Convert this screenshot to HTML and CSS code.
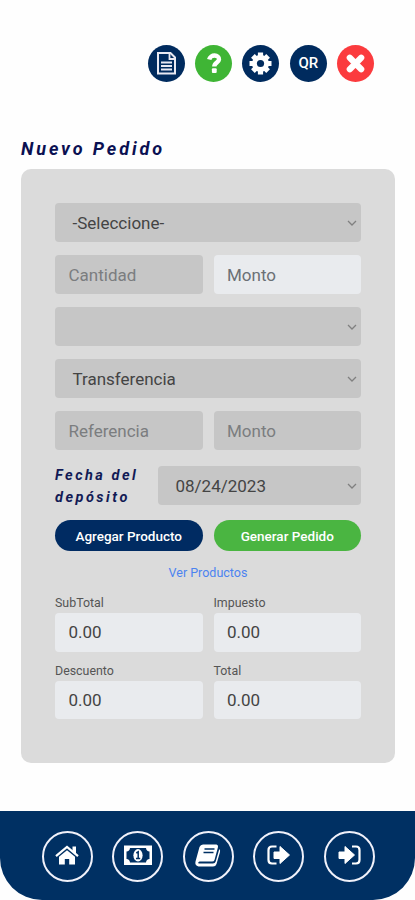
FILE: index.html
```html
<!DOCTYPE html>
<html lang="es">
<head>
    <meta charset="UTF-8">
    <meta name="viewport" content="width=device-width, initial-scale=1.0">
    <title>Nuevo Pedido</title>
    <link rel="stylesheet" href="styles.css">
</head>
<body>
    <!-- Acciones superiores -->
    <header class="top-actions">
        <a class="action" aria-label="Documento">
            <svg width="37" height="37" viewBox="0 0 37 37">
                <path d="M10 8H22.500L27 12.500V28.500H10Z" fill="none" stroke="#e9eaf3" stroke-width="2"/>
                <path d="M21.500 8V14H27" fill="none" stroke="#e9eaf3" stroke-width="1.800"/>
                <path d="M13 17.500H24M13 21H24M13 24.500H24" stroke="#e9eaf3" stroke-width="1.900"/>
            </svg>
        </a>
        <a class="action action-green" aria-label="Ayuda">
            <svg width="37" height="37" viewBox="0 0 37 37">
                <path d="M14.200 14.500C15.200 9 24.500 9.500 24 14.500C23.700 17.500 19.300 17.500 19.300 21.500" fill="none" stroke="#fff" stroke-width="4.400"/>
                <rect x="16.900" y="23.300" width="4.800" height="4.600" rx="1" fill="#fff"/>
            </svg>
        </a>
        <a class="action" aria-label="Ajustes">
            <svg width="37" height="37" viewBox="0 0 37 37">
                <g stroke="#fff" stroke-width="5.200">
                    <path d="M18.500 7.500V29.500M7.500 18.500H29.500"/>
                    <path d="M10.900 10.900L26.100 26.100M26.100 10.900L10.900 26.100"/>
                </g>
                <circle cx="18.500" cy="18.500" r="8.500" fill="#fff"/>
                <circle cx="18.500" cy="18.500" r="3.600" fill="#002b5e"/>
            </svg>
        </a>
        <a class="action">QR</a>
        <a class="action action-red" aria-label="Cerrar">
            <svg width="37" height="37" viewBox="0 0 37 37">
                <path d="M12.800 12.800L24.200 24.200M24.200 12.800L12.800 24.200" stroke="#fff" stroke-width="6.200" stroke-linecap="round"/>
            </svg>
        </a>
    </header>

    <h1 class="title">Nuevo Pedido</h1>

    <!-- Formulario del pedido -->
    <main class="card">
        <div class="field select">
            <span>-Seleccione-</span>
            <svg class="chevron" width="10" height="6" viewBox="0 0 10 6"><path d="M1 1L5 5L9 1"/></svg>
        </div>
        <div class="row">
            <div class="field placeholder">Cantidad</div>
            <div class="field placeholder light">Monto</div>
        </div>
        <div class="field select">
            <span></span>
            <svg class="chevron" width="10" height="6" viewBox="0 0 10 6"><path d="M1 1L5 5L9 1"/></svg>
        </div>
        <div class="field select">
            <span>Transferencia</span>
            <svg class="chevron" width="10" height="6" viewBox="0 0 10 6"><path d="M1 1L5 5L9 1"/></svg>
        </div>
        <div class="row">
            <div class="field placeholder">Referencia</div>
            <div class="field placeholder">Monto</div>
        </div>
        <div class="date-row">
            <div class="date-label">Fecha del depósito</div>
            <div class="field select date">
                <span>08/24/2023</span>
                <svg class="chevron" width="10" height="6" viewBox="0 0 10 6"><path d="M1 1L5 5L9 1"/></svg>
            </div>
        </div>
        <div class="row">
            <a class="btn">Agregar Producto</a>
            <a class="btn btn-green">Generar Pedido</a>
        </div>
        <a class="link">Ver Productos</a>

        <!-- Totales -->
        <div class="totals">
            <div class="total"><label>SubTotal</label><div class="field light">0.00</div></div>
            <div class="total"><label>Impuesto</label><div class="field light">0.00</div></div>
            <div class="total"><label>Descuento</label><div class="field light">0.00</div></div>
            <div class="total"><label>Total</label><div class="field light">0.00</div></div>
        </div>
    </main>

    <!-- Barra inferior -->
    <nav class="bottom-nav">
        <a class="nav-item" aria-label="Inicio">
            <svg width="30" height="30" viewBox="0 0 30 30">
                <path d="M4 15.200L15 6L26 15.200" fill="none" stroke="#fff" stroke-width="2.200"/>
                <path d="M20.500 5.500H24V13L20.500 10Z" fill="#fff"/>
                <path d="M7 15.800L15 9.200L23 15.800V23.500H17.200V18H12.800V23.500H7Z" fill="#fff"/>
            </svg>
        </a>
        <a class="nav-item" aria-label="Pagos">
            <svg width="30" height="30" viewBox="0 0 30 30">
                <rect x="1" y="4.500" width="28" height="19.500" fill="#fff"/>
                <path d="M7 7H23A4 4 0 0 0 26.500 10.500V18A4 4 0 0 0 23 21.500H7A4 4 0 0 0 3.500 18V10.500A4 4 0 0 0 7 7Z" fill="#003063"/>
                <ellipse cx="15" cy="14.300" rx="4.600" ry="6.200" fill="#fff"/>
                <path d="M13.300 12L15.200 10.800V17M13 17.500H17.200" fill="none" stroke="#003063" stroke-width="1.500"/>
            </svg>
        </a>
        <a class="nav-item" aria-label="Catálogo">
            <svg width="30" height="30" viewBox="0 0 30 30">
                <path d="M10 3.500H23.500Q25.500 4 25 6L21.500 19Q21 20.500 19 20.500H6.500Q4.500 21 5.500 22.500H20Q22 22.500 22.700 20.500L26.300 8Q27.500 9.500 27 11L23.500 23Q22.700 25.500 20 25.500H5.500Q1.500 24.500 2.500 20.500L6.500 6Q7.500 3.500 10 3.500Z" fill="#fff"/>
                <path d="M11.500 8H21.500M10.500 11.500H20.500" stroke="#003063" stroke-width="1.600"/>
            </svg>
        </a>
        <a class="nav-item" aria-label="Salir">
            <svg width="30" height="30" viewBox="0 0 30 30">
                <path d="M12.500 5.500H8Q4.500 5.500 4.500 9V19Q4.500 22.500 8 22.500H12.500" fill="none" stroke="#fff" stroke-width="2.200"/>
                <path d="M10 11H16V5.500L25.500 14L16 22.500V17.500H10Z" fill="#fff" stroke="#fff" stroke-linejoin="round"/>
            </svg>
        </a>
        <a class="nav-item" aria-label="Entrar">
            <svg width="30" height="30" viewBox="0 0 30 30">
                <path d="M18 5.500H22Q25.500 5.500 25.500 9V19Q25.500 22.500 22 22.500H18" fill="none" stroke="#fff" stroke-width="2.200"/>
                <path d="M5 11H11V5.500L20.500 14L11 22.500V17.500H5Z" fill="#fff" stroke="#fff" stroke-linejoin="round"/>
            </svg>
        </a>
    </nav>
</body>
</html>
```
FILE: styles.css
```css
* {
    box-sizing: border-box;
}
body {
    margin: 0;
    height: 900px;
    display: flex;
    flex-direction: column;
    background: #fefefe;
    font-family: Roboto, "Liberation Sans", sans-serif;
    color: #444;
}

/* Acciones superiores */
.top-actions {
    display: flex;
    justify-content: flex-end;
    gap: 10.400px;
    padding: 44.500px 40.800px 0 0;
}
.action {
    width: 37px;
    height: 37px;
    border-radius: 50%;
    background: #002b5e;
    display: flex;
    align-items: center;
    justify-content: center;
    color: #fff;
    font-size: 15px;
    font-weight: 500;
}
.action-green {
    background: #3fb535;
}
.action-red {
    background: #fb3b3e;
}

.title {
    margin: 56.500px 0 0 21px;
    height: 31px;
    line-height: 22px;
    font-size: 18px;
    font-style: italic;
    font-weight: 700;
    letter-spacing: 2.900px;
    color: #0a1052;
}

/* Formulario */
.card {
    height: 594px;
    margin: 0 20px 0 21px;
    padding: 34px 34px 0;
    border-radius: 10px;
    background: #dbdbdb;
    display: flex;
    flex-direction: column;
    gap: 13px;
}
.row {
    display: grid;
    grid-template-columns: 1fr 1fr;
    gap: 11px;
}
.field {
    height: 39px;
    padding: 1px 13.500px 0;
    border-radius: 4px;
    background: #c6c6c6;
    display: flex;
    align-items: center;
    font-size: 17px;
}
.placeholder {
    color: #7b7d7f;
}
.light {
    background: #e9ebee;
}
.light.placeholder {
    color: #6b7075;
}
.select {
    justify-content: space-between;
    padding: 1px 4px 0 17.500px;
}
.chevron path {
    fill: none;
    stroke: #808080;
    stroke-width: 1.300;
}
.date-row {
    height: 44px;
    display: flex;
    align-items: center;
    justify-content: space-between;
}
.date-label {
    width: 95px;
    padding-top: 3px;
    line-height: 22px;
    font-size: 14.500px;
    font-style: italic;
    font-weight: 700;
    letter-spacing: 2.500px;
    color: #121a55;
}
.date {
    width: 203px;
}
.btn {
    height: 31px;
    border-radius: 16px;
    background: #002b62;
    color: #fff;
    display: flex;
    align-items: center;
    justify-content: center;
    font-size: 13.500px;
    font-weight: 500;
}
.btn-green {
    background: #4ab541;
}
.link {
    align-self: center;
    line-height: 17px;
    font-size: 12.500px;
    color: #4b83f0;
}

/* Totales */
.totals {
    display: grid;
    grid-template-columns: 1fr 1fr;
    gap: 10px 11px;
}
.total label {
    display: block;
    height: 19px;
    line-height: 17px;
    font-size: 12.400px;
    color: #555;
}
.total .field {
    height: 38.500px;
    padding-top: 0;
}

/* Barra inferior */
.bottom-nav {
    height: 89px;
    margin-top: auto;
    border-radius: 0 0 42px 42px;
    background: #003063;
    display: flex;
    justify-content: center;
    gap: 19.500px;
    padding: 19.500px 0 0 1px;
}
.nav-item {
    width: 51px;
    height: 51px;
    border: 2px solid #f0f1fa;
    border-radius: 50%;
    display: flex;
    align-items: center;
    justify-content: center;
}
```
